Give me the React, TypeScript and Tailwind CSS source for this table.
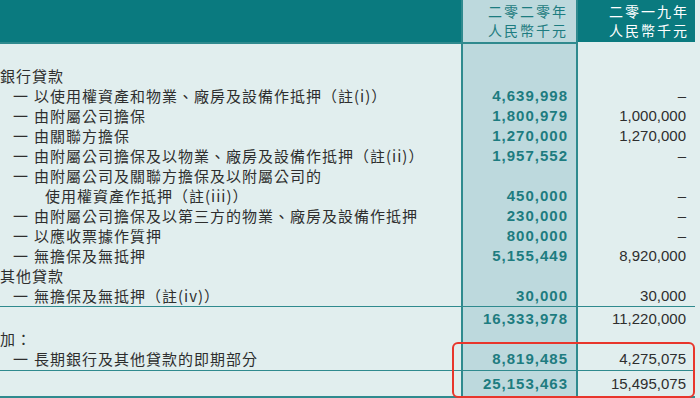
const cjk = "font-['Noto_Sans_CJK_TC','Noto_Sans',sans-serif]";
const num = "font-['Liberation_Sans',Arial,sans-serif]";

type Row = { label: string; kind: 'head' | 'item' | 'cont'; a?: string; b?: string };

const rows: Row[] = [
  { label: '銀行貸款', kind: 'head' },
  { label: '以使用權資產和物業、廠房及設備作抵押（註(i)）', kind: 'item', a: '4,639,998', b: '–' },
  { label: '由附屬公司擔保', kind: 'item', a: '1,800,979', b: '1,000,000' },
  { label: '由關聯方擔保', kind: 'item', a: '1,270,000', b: '1,270,000' },
  { label: '由附屬公司擔保及以物業、廠房及設備作抵押（註(ii)）', kind: 'item', a: '1,957,552', b: '–' },
  { label: '由附屬公司及關聯方擔保及以附屬公司的', kind: 'item' },
  { label: '使用權資產作抵押（註(iii)）', kind: 'cont', a: '450,000', b: '–' },
  { label: '由附屬公司擔保及以第三方的物業、廠房及設備作抵押', kind: 'item', a: '230,000', b: '–' },
  { label: '以應收票據作質押', kind: 'item', a: '800,000', b: '–' },
  { label: '無擔保及無抵押', kind: 'item', a: '5,155,449', b: '8,920,000' },
  { label: '其他貸款', kind: 'head' },
  { label: '無擔保及無抵押（註(iv)）', kind: 'item', a: '30,000', b: '30,000' },
];

function Label({ row }: { row: Row }) {
  if (row.kind === 'head') return <span>{row.label}</span>;
  if (row.kind === 'cont') return <span className="pl-[45px]">{row.label}</span>;
  return (
    <span className="flex">
      <span className="w-[34px] pl-[13px]">一</span>
      <span>{row.label}</span>
    </span>
  );
}

function Line({ h, label, a, b, top }: { h: string; label?: React.ReactNode; a?: string; b?: string; top?: boolean }) {
  return (
    <div className={`flex ${h} ${top ? 'border-t border-[#2f8a8e]' : ''}`}>
      <div className={`flex-1 flex items-center ${cjk} text-[15px] leading-[18px] tracking-[1px] text-[#2e2e2e] whitespace-nowrap`}>
        {label}
      </div>
      <div className={`w-[117px] bg-[#bdd9dd] border-x-2 border-[#2f8a8e] flex items-center justify-end pr-[8px] ${num} font-bold text-[15px] leading-[18px] tracking-[1px] text-[#1d7c80]`}>
        {a}
      </div>
      <div className={`w-[117px] flex items-center justify-end pr-[9px] ${num} text-[15px] leading-[18px] text-[#2e2e2e]`}>
        {b}
      </div>
    </div>
  );
}

export default function App() {
  return (
    <div className="relative w-[700px] h-[398px] overflow-hidden bg-[#e1eeee]">
      <div className="w-[695px]">
        <div className="flex h-[42px] bg-[#0a7a7f]">
          <div className="flex-1" />
          <div className={`w-[117px] bg-[#bdd9dd] border-x-2 border-[#2f8a8e] flex flex-col items-end justify-center pr-[8px] ${cjk} text-[14px] leading-[19px] tracking-[2px] text-[#1d7c80]`}>
            <span>二零二零年</span>
            <span>人民幣千元</span>
          </div>
          <div className={`w-[117px] flex flex-col items-end justify-center pr-[6px] ${cjk} text-[14px] leading-[19px] tracking-[2px] text-white`}>
            <span>二零一九年</span>
            <span>人民幣千元</span>
          </div>
        </div>
        <div className="h-[2px] bg-[#2f8a8e] w-[578px]" />
        <Line h="h-[22px]" />
        {rows.map((r, i) => (
          <Line key={i} h="h-[20px]" label={<Label row={r} />} a={r.a} b={r.b} />
        ))}
        <Line h="h-[24px]" top a="16,333,978" b="11,220,000" />
        <Line h="h-[18px]" label={<span>加：</span>} />
        <Line h="h-[22px]" label={<Label row={{ label: '長期銀行及其他貸款的即期部分', kind: 'item' }} />} a="8,819,485" b="4,275,075" />
        <Line h="h-[26px]" top a="25,153,463" b="15,495,075" />
        <div className="h-[2px] bg-[#2f8a8e]" />
      </div>
      <div className="absolute left-[452px] top-[342px] w-[243px] h-[56px] border-2 border-[#e8362c] rounded-[6px]" />
    </div>
  );
}
